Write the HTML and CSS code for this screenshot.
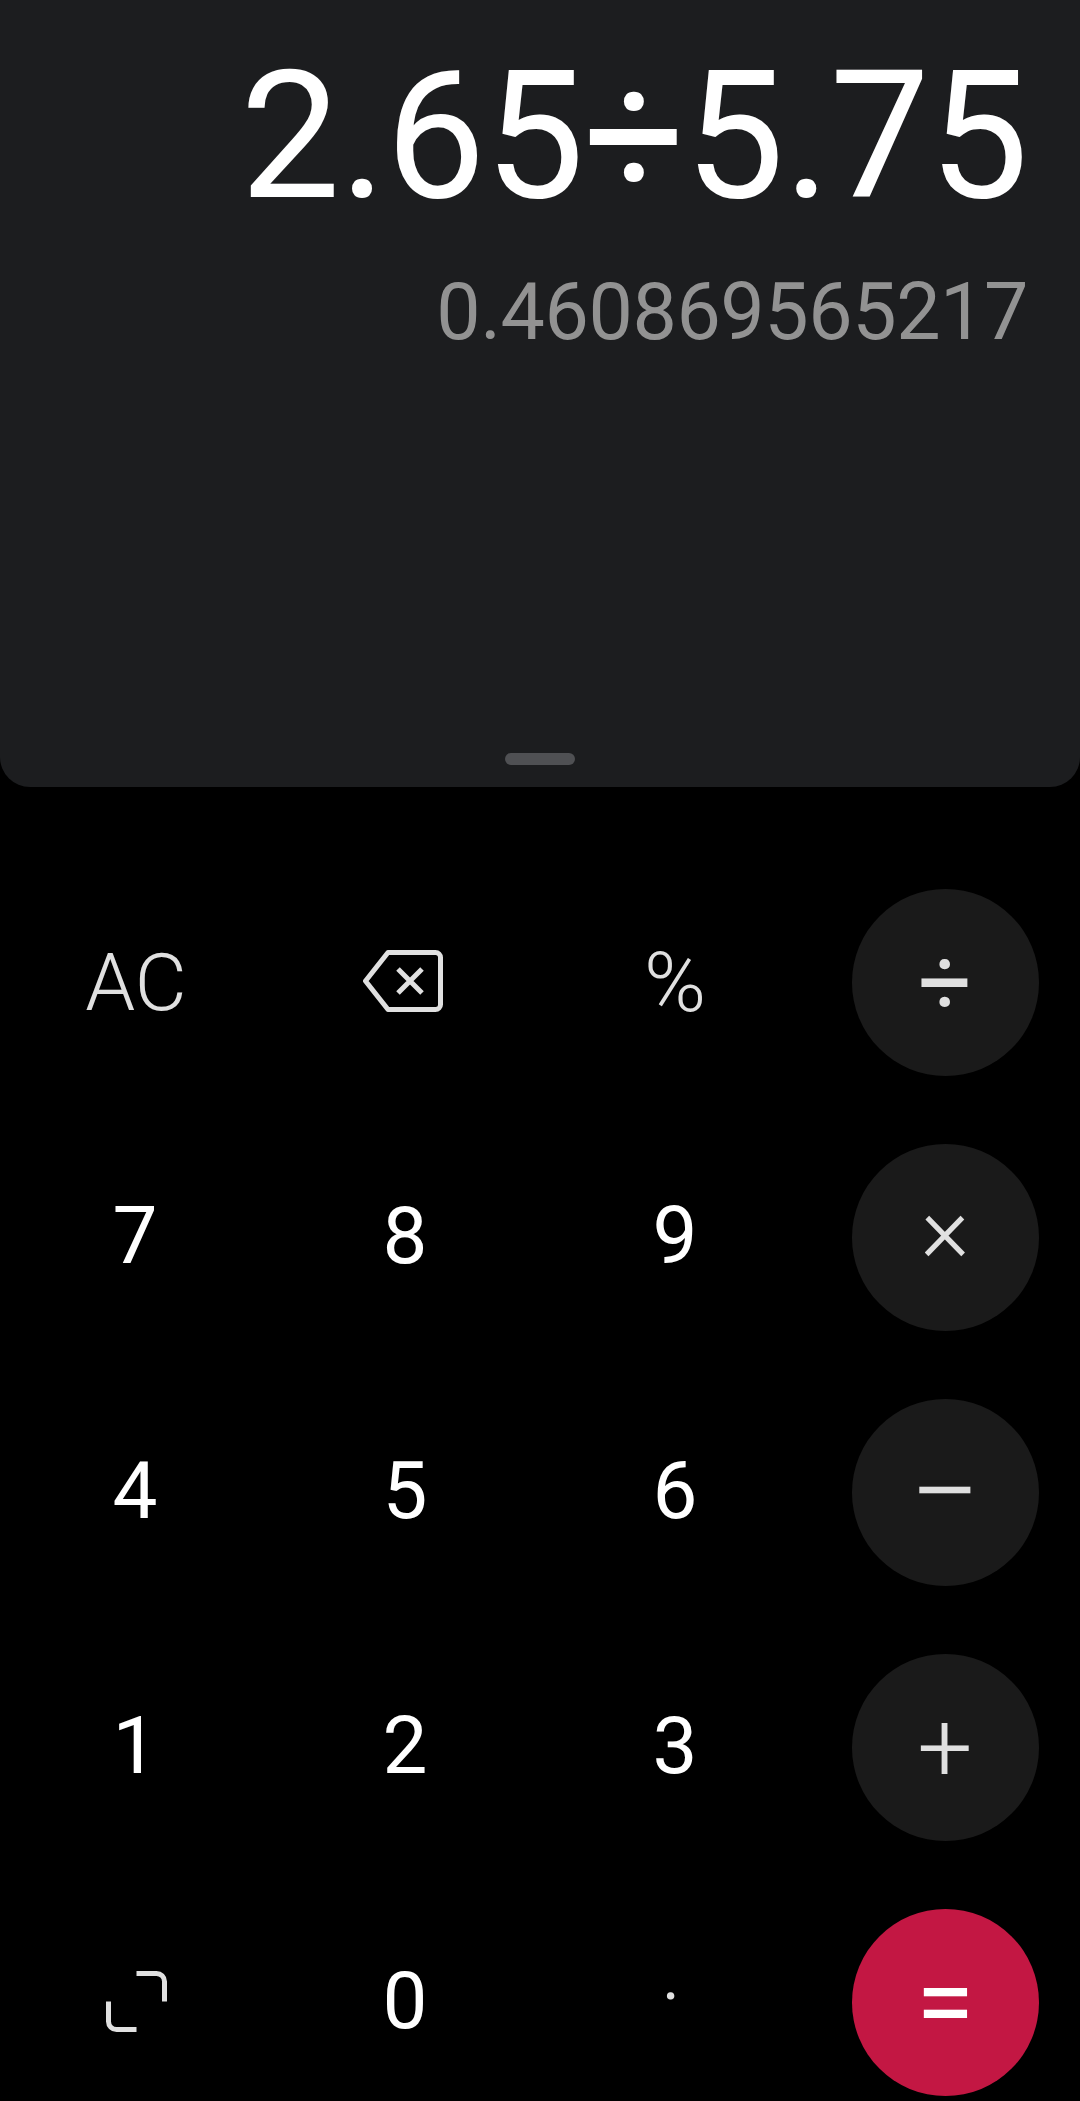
FILE: index.html
```html
<!DOCTYPE html>
<html lang="en">
<head>
<meta charset="utf-8">
<title>Calculator</title>
<link rel="stylesheet" href="styles.css">
</head>
<body>
<main class="calc">
  <section class="display">
    <div class="expr">2.65÷5.75</div>
    <div class="result">0.460869565217</div>
    <div class="handle"></div>
  </section>
  <section class="keypad">
    <div class="key light ac">AC</div>
    <div class="key back"><svg class="ico" width="80" height="62" viewBox="0 0 80 62"><path d="M25 2.500H72.500a5 5 0 0 1 5 5V54.500a5 5 0 0 1-5 5H25L2.500 31Z" fill="none" stroke="#e0e0e0" stroke-width="5" stroke-linejoin="round"/><path d="M35 19L59 43M59 19L35 43" fill="none" stroke="#e0e0e0" stroke-width="5"/></svg></div>
    <div class="key light pct">%</div>
    <div class="key op div">÷</div>
    <div class="key num">7</div><div class="key num">8</div><div class="key num">9</div><div class="key op mul">×</div>
    <div class="key num">4</div><div class="key num">5</div><div class="key num">6</div><div class="key op sub">−</div>
    <div class="key num">1</div><div class="key num">2</div><div class="key num">3</div><div class="key op add">+</div>
    <div class="key expand"><svg class="ico" width="61" height="61" viewBox="0 0 61 61"><path d="M2.500 30.500V50.500a8 8 0 0 0 8 8H30.500M30.500 2.500H50.500a8 8 0 0 1 8 8V30.500" fill="none" stroke="#e0e0e0" stroke-width="5"/></svg></div>
    <div class="key num">0</div>
    <div class="key dot">.</div>
    <div class="key op eq">=</div>
  </section>
</main>
</body>
</html>
```
FILE: styles.css
```css
html, body { margin: 0; padding: 0; background: #000; }
.calc { width: 1080px; height: 2101px; background: #000; font-family: Roboto, sans-serif; overflow: hidden; }
.display { height: 787px; box-sizing: border-box; background: #1c1d1f; border-radius: 0 0 30px 30px; padding: 31px 52px 0 0; display: flex; flex-direction: column; align-items: flex-end; position: relative; }
.expr { font-size: 178px; line-height: 210px; letter-spacing: -0.900px; color: #fff; white-space: nowrap; }
.result { font-size: 79px; line-height: 94px; letter-spacing: -0.450px; color: #929292; margin-top: 24px; white-space: nowrap; }
.handle { position: absolute; left: 505px; top: 753px; width: 70px; height: 12px; border-radius: 6px; background: #4f5053; }
.keypad { margin-top: 102px; display: grid; grid-template-columns: repeat(4, 270px); grid-auto-rows: 187px; row-gap: 68px; }
.key { display: flex; align-items: center; justify-content: center; box-sizing: border-box; color: #fff; line-height: 1; }
.num { font-size: 80px; padding-bottom: 4px; }
.light { font-weight: 300; font-size: 80px; color: #e0e0e0; }
.ac { padding-left: 2px; }
.pct { font-size: 84px; }
.ico { display: block; }
.back { padding: 0 4px 3px 0; }
.expand { padding: 0 0 2px 3px; }
.dot { font-size: 66px; color: #e0e0e0; padding: 0 8px 52px 0; }
.op { width: 187px; height: 187px; border-radius: 50%; background: #1a1a1a; justify-self: center; color: #e0e0e0; font-weight: 300; }
.div { font-size: 94px; font-weight: 400; }
.mul { font-size: 94px; padding-bottom: 18px; }
.sub { font-size: 125px; }
.add { font-size: 98px; }
.eq { font-size: 106px; font-weight: 400; background: #c31743; color: #fff; }
```
